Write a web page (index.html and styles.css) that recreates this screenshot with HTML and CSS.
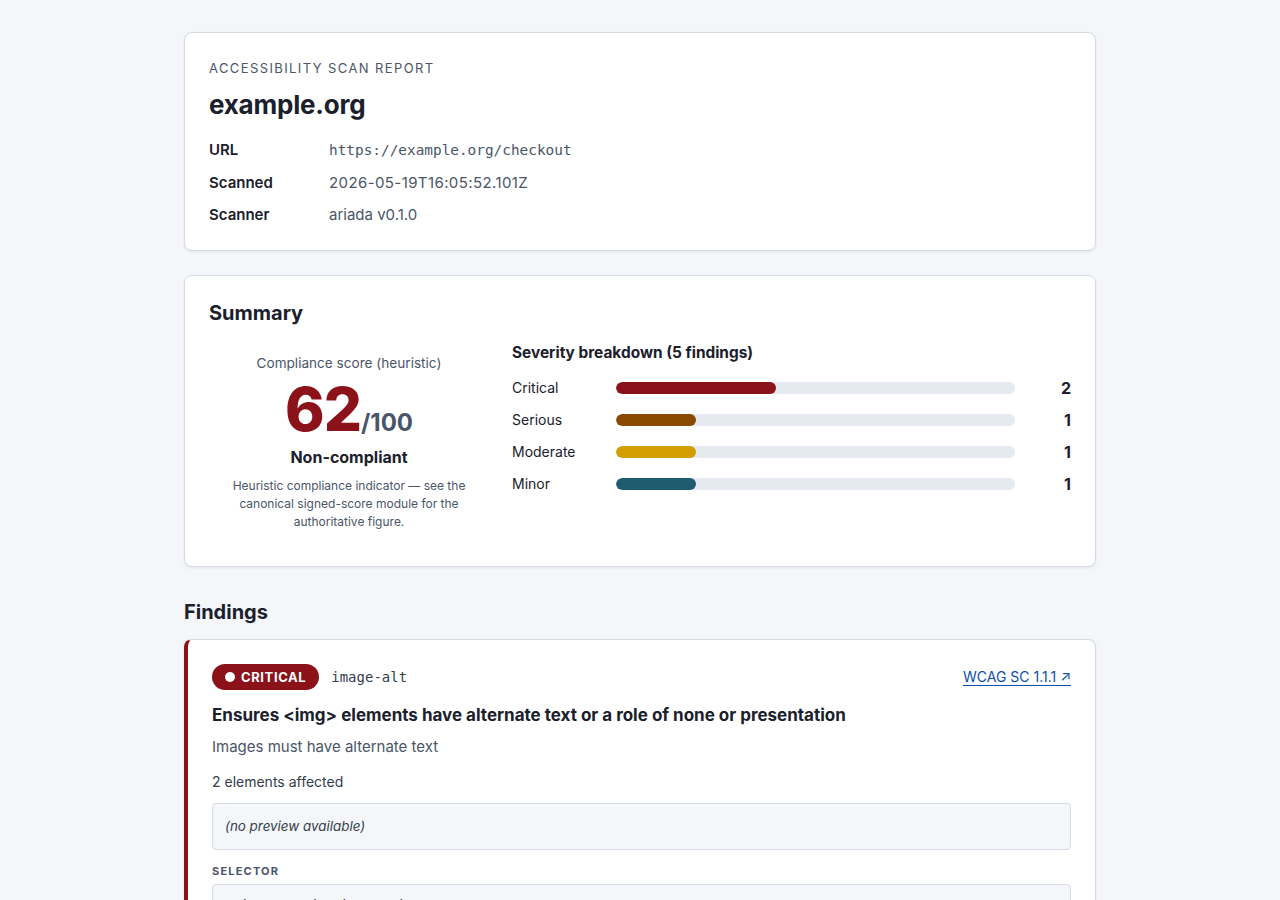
FILE: index.html
```html
<!DOCTYPE html>
<html lang="en">
<head>
    <meta charset="UTF-8">
    <title>Accessibility scan report - example.org</title>
    <link rel="stylesheet" href="styles.css">
</head>
<body>
    <main class="report">
        <!-- header -->
        <section class="card header-card">
            <div class="eyebrow">Accessibility scan report</div>
            <h1>example.org</h1>
            <dl class="meta">
                <dt>URL</dt>
                <dd class="mono">https://example.org/checkout</dd>
                <dt>Scanned</dt>
                <dd class="stamp">2026-05-19T16:05:52.101Z</dd>
                <dt>Scanner</dt>
                <dd>ariada v0.1.0</dd>
            </dl>
        </section>

        <!-- summary -->
        <section class="card summary-card">
            <h2>Summary</h2>
            <div class="summary">
                <div class="score">
                    <div class="score-label">Compliance score (heuristic)</div>
                    <div class="score-value"><span class="num">62</span><span class="of">/100</span></div>
                    <div class="score-status">Non-compliant</div>
                    <p class="score-note">Heuristic compliance indicator — see the canonical signed-score module for the authoritative figure.</p>
                </div>
                <div class="breakdown">
                    <h3>Severity breakdown (5 findings)</h3>
                    <div class="sev-row">
                        <span class="sev-name">Critical</span>
                        <div class="track"><div class="fill critical" style="width: 40%"></div></div>
                        <span class="sev-count">2</span>
                    </div>
                    <div class="sev-row">
                        <span class="sev-name">Serious</span>
                        <div class="track"><div class="fill serious" style="width: 20%"></div></div>
                        <span class="sev-count">1</span>
                    </div>
                    <div class="sev-row">
                        <span class="sev-name">Moderate</span>
                        <div class="track"><div class="fill moderate" style="width: 20%"></div></div>
                        <span class="sev-count">1</span>
                    </div>
                    <div class="sev-row">
                        <span class="sev-name">Minor</span>
                        <div class="track"><div class="fill minor" style="width: 20%"></div></div>
                        <span class="sev-count">1</span>
                    </div>
                </div>
            </div>
        </section>

        <!-- findings -->
        <h2 class="section-title">Findings</h2>
        <article class="card finding critical-edge">
            <div class="finding-top">
                <span class="badge critical"><span class="dot"></span>Critical</span>
                <code class="rule-id">image-alt</code>
                <a class="wcag" href="#">WCAG SC 1.1.1 ↗</a>
            </div>
            <h3 class="finding-title">Ensures &lt;img&gt; elements have alternate text or a role of none or presentation</h3>
            <p class="finding-help">Images must have alternate text</p>
            <p class="affected">2 elements affected</p>
            <div class="preview">(no preview available)</div>
            <div class="field-label">Selector</div>
            <pre class="code-box">main &gt; section.hero &gt; img</pre>
        </article>
    </main>
</body>
</html>
```

FILE: styles.css
```css
body {
    margin: 0;
    background: #f5f6fa;
    color: #1a202c;
    font-family: Inter, "Noto Sans", sans-serif;
}

.report {
    width: 912px;
    margin: 0 auto;
    padding: 32px 0 40px;
}

.card {
    background: white;
    border: 1px solid #d5dbe3;
    border-radius: 8px;
    box-shadow: 0 1px 3px rgba(15, 23, 42, 0.08);
    padding: 24px;
    margin-bottom: 24px;
}

.mono, code, pre {
    font-family: "DejaVu Sans Mono", "Liberation Mono", monospace;
}

/* header */
.header-card {
    padding-top: 26px;
    padding-bottom: 18px;
}

.eyebrow {
    font-size: 13px;
    letter-spacing: 1.4px;
    text-transform: uppercase;
    color: #4a5568;
    line-height: 18px;
}

h1 {
    font-size: 26px;
    font-weight: 700;
    margin: 11px 0 12px;
    line-height: 34px;
    letter-spacing: -0.2px;
}

.meta {
    display: grid;
    grid-template-columns: 120px 1fr;
    margin: 0;
}

.meta dt {
    font-weight: 600;
    font-size: 15px;
    line-height: 32.5px;
}

.meta dd {
    margin: 0;
    font-size: 15px;
    line-height: 32.5px;
    color: #4a5568;
}

.meta dd.stamp {
    letter-spacing: 0.4px;
}

.meta dd.mono {
    font-size: 14.4px;
}

/* summary */
.summary-card {
    padding-top: 24px;
    padding-bottom: 35px;
}

h2 {
    font-size: 20px;
    font-weight: 700;
    margin: 0;
    line-height: 26px;
}

.summary {
    display: grid;
    grid-template-columns: 280px 1fr;
    gap: 23px;
    margin-top: 16px;
}

.score {
    text-align: center;
    padding-top: 11px;
}

.score-label {
    font-size: 13.6px;
    color: #4a5568;
    line-height: 20px;
}

.score-value {
    display: flex;
    justify-content: center;
    align-items: baseline;
    margin-top: 6px;
    line-height: 1;
}

.score-value .num {
    font-size: 60px;
    font-weight: 800;
    color: #8b1219;
    letter-spacing: -1px;
}

.score-value .of {
    font-size: 24px;
    font-weight: 700;
    color: #4a5568;
}

.score-status {
    font-size: 16px;
    font-weight: 700;
    margin-top: 6px;
    line-height: 24px;
}

.score-note {
    font-size: 12px;
    line-height: 18px;
    color: #4a5568;
    margin: 8px 8px 0;
}

.breakdown h3 {
    font-size: 15.4px;
    font-weight: 700;
    margin: 0 0 8px;
    line-height: 22px;
}

.sev-row {
    display: grid;
    grid-template-columns: 104px 1fr 56px;
    align-items: center;
    height: 32px;
}

.sev-name {
    font-size: 14px;
    color: #1a202c;
}

.track {
    height: 12px;
    background: #e5e9f0;
    border-radius: 6px;
    overflow: hidden;
}

.fill {
    height: 100%;
    border-radius: 6px;
}

.fill.critical { background: #8b1219; }
.fill.serious { background: #8a4b00; }
.fill.moderate { background: #d39e00; }
.fill.minor { background: #205c70; }

.sev-count {
    text-align: right;
    font-size: 16px;
    font-weight: 700;
}

/* findings */
.section-title {
    margin: 32px 0 14px;
    line-height: 26px;
}

.finding {
    padding: 24px 24px 0;
}

.critical-edge {
    border-left: 4px solid #8b1219;
}

.finding-top {
    display: flex;
    align-items: center;
    gap: 12px;
}

.badge {
    display: inline-flex;
    align-items: center;
    gap: 6px;
    height: 26px;
    padding: 0 13px;
    border-radius: 13px;
    font-size: 13px;
    font-weight: 700;
    letter-spacing: 0.6px;
    text-transform: uppercase;
    color: white;
}

.badge.critical {
    background: #8b1219;
}

.badge .dot {
    width: 10px;
    height: 10px;
    border-radius: 50%;
    background: white;
}

.rule-id {
    font-size: 14px;
    color: #333d4b;
}

.wcag {
    margin-left: auto;
    font-size: 14px;
    color: #0b4fa8;
    text-decoration: underline;
    text-underline-offset: 3px;
}

.finding-title {
    font-size: 17px;
    font-weight: 700;
    margin: 13px 0 0;
    line-height: 24px;
}

.finding-help {
    font-size: 15px;
    color: #4a5568;
    margin: 9px 0 0;
    line-height: 22px;
}

.affected {
    font-size: 14px;
    color: #333d4b;
    margin: 14px 0 0;
    line-height: 20px;
}

.preview {
    margin-top: 11px;
    background: #f5f6fa;
    border: 1px solid #d5dbe3;
    border-radius: 4px;
    padding: 12px;
    font-size: 13.4px;
    font-style: italic;
    color: #333d4b;
    line-height: 21px;
}

.field-label {
    margin-top: 14px;
    font-size: 11px;
    font-weight: 700;
    letter-spacing: 1.2px;
    text-transform: uppercase;
    color: #4a5568;
    line-height: 14px;
}

.code-box {
    margin: 6px 0 16px;
    background: #f5f6fa;
    border: 1px solid #d5dbe3;
    border-radius: 4px;
    padding: 12px;
    font-size: 13px;
    color: #1a202c;
}
```
